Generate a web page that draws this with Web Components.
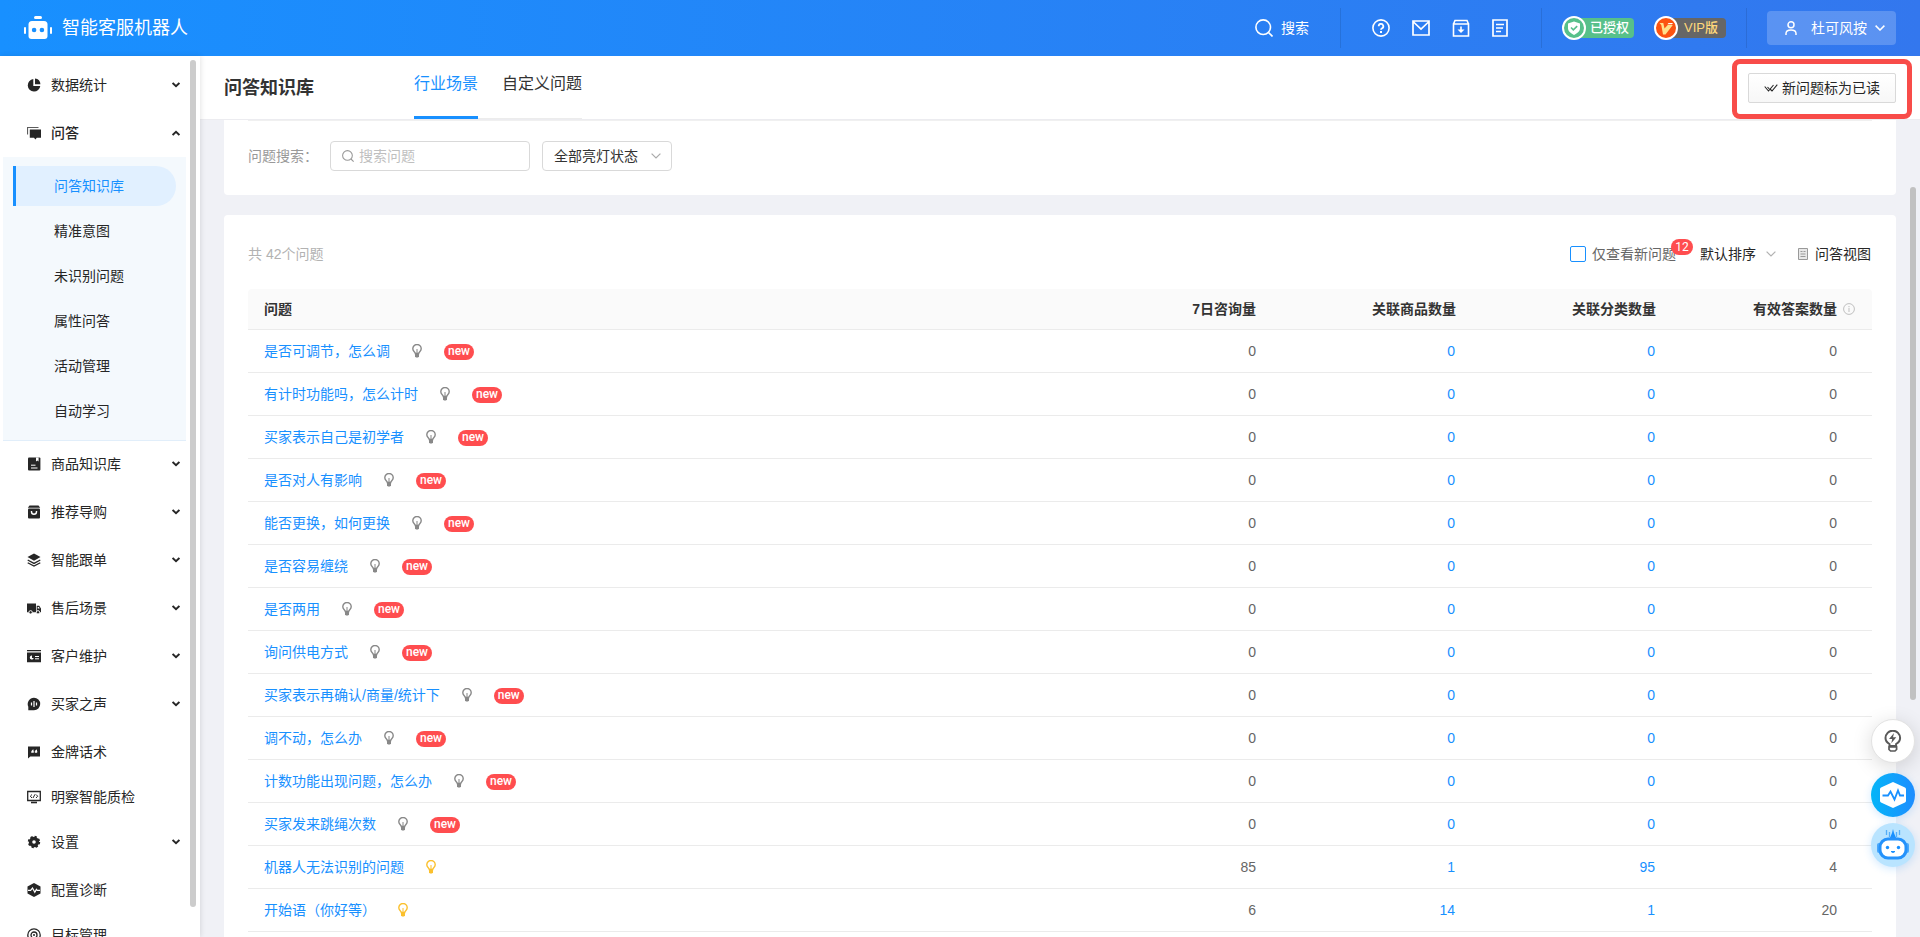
<!DOCTYPE html>
<html lang="zh-CN">
<head>
<meta charset="utf-8">
<title>智能客服机器人 - 问答知识库</title>
<style>
  html, body { height: 100%; margin: 0; }
  body {
    overflow: hidden;
    font: 14px/20px "Liberation Sans", "Noto Sans CJK SC", sans-serif;
    color: #333;
    background: #f0f1f6;
  }
</style>
</head>
<body>
<kb-app></kb-app>
<script>
const ICONS = {
  logo: ['0 0 28 24', '<g fill="#fff"><rect x="10" y="0" width="8" height="3" rx="1.5"/><path d="M8 5h12a3.500 3.500 0 0 1 3.500 3.500V20a3 3 0 0 1-3 3h-13a3 3 0 0 1-3-3V8.500A3.500 3.500 0 0 1 8 5z"/><rect x="0" y="11" width="2" height="7" rx="1"/><rect x="26" y="11" width="2" height="7" rx="1"/></g><circle cx="10.100" cy="14" r="2.300" fill="#1890ff"/><circle cx="17.900" cy="14" r="2.300" fill="#1890ff"/>'],
  search: ['0 0 18 18', '<g fill="none" stroke="currentColor" stroke-width="1.600"><circle cx="8.200" cy="8.200" r="7.300"/><path d="M13.500 13.500l4 4"/></g>'],
  help: ['0 0 18 18', '<g fill="none" stroke="currentColor" stroke-width="1.600"><circle cx="9" cy="9" r="8.100"/><path d="M6.700 7.200a2.300 2.300 0 1 1 3.400 2c-.8.450-1.100.8-1.100 1.600" stroke-width="1.800"/></g><rect x="8" y="12" width="2" height="2" fill="currentColor"/>'],
  mail: ['0 0 18 18', '<path d="M1 2h16v14H1zM1.500 3L9 10l7.500-7" fill="none" stroke="currentColor" stroke-width="1.700"/>'],
  inbox: ['0 0 18 18', '<path d="M1.500 5h15v12h-15zM1.500 5l1.500-3.500h12L16.500 5M9 7.500v5" fill="none" stroke="currentColor" stroke-width="1.600"/><path d="M5.500 10.500h7L9 14z" fill="currentColor"/>'],
  note: ['0 0 16 18', '<path d="M1 1h14v16H1zM4 5.500h8M4 9h7M4 12.500h5" fill="none" stroke="currentColor" stroke-width="1.700"/>'],
  shield: ['0 0 24 24', '<circle cx="12" cy="12" r="11" fill="#57c08a" stroke="#fff" stroke-width="2"/><path d="M12 5.500l6 2v4.500c0 3.200-2.500 5.200-6 7-3.500-1.800-6-3.800-6-7V7.500z" fill="#fff"/><path d="M9 11.500l2.300 2.300 3.900-3.700" fill="none" stroke="#57c08a" stroke-width="1.600"/>'],
  vip: ['0 0 24 24', '<circle cx="12" cy="12" r="11" fill="#fc5310" stroke="#fff" stroke-width="2"/><path d="M5.500 7h3.800l1.200 5.500L13.800 9h5L11.500 18.500H9L7.300 9z" fill="#ffe08a"/><path d="M14.500 7h4.500l-1 1.300h-4.500z" fill="#fff"/>'],
  user: ['0 0 12 14', '<g fill="none" stroke="currentColor" stroke-width="1.500"><circle cx="6" cy="3.800" r="3"/><path d="M1 14v-1.500C1 10.200 3 9 6 9s5 1.200 5 3.500V14"/></g>'],
  down: ['0 0 10 6', '<path d="M.6.600L5 5 9.400.6" fill="none" stroke="currentColor" stroke-width="1.500"/>'],
  thin: ['0 0 10 6', '<path d="M.6.600L5 5 9.400.6" fill="none" stroke="currentColor" stroke-width="1.200"/>'],
  caret: ['0 0 8 6', '<path d="M.6 1L4 4.300 7.400 1" fill="none" stroke="currentColor" stroke-width="1.900"/>'],
  checks: ['0 0 14 10', '<path d="M.7 3.500l3.800 4.500 5-6M6 6l2 2 5.300-6.300M3.500 4l1.800 2" fill="none" stroke="currentColor" stroke-width="1.100"/>'],
  bulb: ['0 0 10 14', '<path d="M3.300 9.500C3.300 7.800.8 7.300.8 4.700a4.200 4.200 0 0 1 8.400 0c0 2.600-2.500 3.100-2.500 4.800z" fill="none" stroke="currentColor" stroke-width="1.400"/><path d="M3 9h4v3.500L6 13.500H4L3 12.500z" fill="currentColor"/><path d="M5 5v4.500" stroke="currentColor"/>'],
  view: ['0 0 10 12', '<path d="M.5.500h9v11h-9z" fill="#e8e8e8" stroke="currentColor"/><path d="M2.500 3.500h2M5.500 3.500h2M2.500 6h5M2.500 8.500h5" stroke="currentColor"/>'],
  info: ['0 0 12 12', '<circle cx="6" cy="6" r="5.400" fill="none" stroke="currentColor"/><path d="M6 5v4M6 3v1.200" stroke="currentColor"/>'],
  pie: ['0 0 14 14', '<path d="M6.300 1v7h7A6.300 6.300 0 1 1 6.300 1z" fill="currentColor"/><path d="M8 .6A6 6 0 0 1 13.400 6.300H8z" fill="currentColor"/>'],
  chat: ['0 0 14 14', '<path d="M.5 8.500V1.500h11" fill="none" stroke="currentColor" stroke-opacity=".75" stroke-width="1.200"/><path d="M2.800 3.500H14v8.200H9.800L8.400 13.500 7 11.700H2.800z" fill="currentColor"/>'],
  book: ['0 0 14 14', '<rect x="1" y=".5" width="12.400" height="13" rx="1" fill="currentColor"/><path d="M9 .5v4l1.300-1 1.300 1v-4z" fill="#fff"/><path d="M4 8.200h4.500M4 11h6.500" stroke="#fff"/>'],
  bag: ['0 0 14 14', '<path d="M2.500.5h9l1.700 2.200H.8z" fill="currentColor"/><rect x="1" y="3.500" width="12" height="10" rx="1" fill="currentColor"/><path d="M4.500 6v.8a2.500 2.500 0 0 0 5 0V6" fill="none" stroke="#fff" stroke-width="1.400"/>'],
  stack: ['0 0 14 14', '<path d="M7 .5l6.500 3.600L7 7.800.5 4.100z" fill="currentColor"/><path d="M.7 7L7 10.400 13.300 7M.7 9.700L7 13.100l6.300-3.400" fill="none" stroke="currentColor" stroke-width="1.300"/>'],
  truck: ['0 0 14 14', '<path d="M0 2.500h9v8.700H0zM9.700 4.800h2.500L14 7.600v3.600H9.700z" fill="currentColor"/><path d="M10.700 6h1.200l.8 1.600h-2z" fill="#fff"/><g fill="currentColor" stroke="#fff" stroke-width=".9"><circle cx="3.600" cy="11.300" r="1.700"/><circle cx="11" cy="11.300" r="1.700"/></g>'],
  crm: ['0 0 14 14', '<path d="M0 1h14v1.300H0zM0 3.500h14v9.700H0z" fill="currentColor"/><path d="M5 6.500a2 2 0 1 0 1.700 2.500H5z" fill="#fff"/><path d="M8 7.500h4M8 9.800h4" stroke="#fff"/>'],
  voice: ['0 0 14 14', '<path d="M7 .8a6.200 6.200 0 1 1 0 12.400H1.300v-3.500A6.200 6.200 0 0 1 7 .8z" fill="currentColor"/><path d="M4.500 5.500v3M7 4v6M9.500 5.500v3" stroke="#fff" stroke-width="1.200"/>'],
  quote: ['0 0 14 14', '<path d="M1 1.500h12v10H3.300L1 13.500z" fill="currentColor"/><path d="M6.500 4.800c-1.300.3-2 1-2 2.700h2V6M10 4.800c-1.300.3-2 1-2 2.700h2V6" fill="#fff" stroke="#fff" stroke-width=".5"/>'],
  monitor: ['0 0 14 14', '<path d="M.7 1.500h12.600v9H.7z" fill="none" stroke="currentColor" stroke-width="1.300"/><path d="M5 4.500L3.300 6.200 5 8M6 8l2-3.700M9 4.500l1.700 1.700L9 8" fill="none" stroke="currentColor"/><path d="M4 12.500h6" stroke="currentColor" stroke-width="1.600"/>'],
  gear: ['0 0 14 14', '<circle cx="7" cy="7" r="5.200" fill="currentColor"/><circle cx="7" cy="7" r="5" fill="none" stroke="currentColor" stroke-width="2.400" stroke-dasharray="2.100 1.820"/><circle cx="7" cy="7" r="1.800" fill="#fff"/>'],
  diag: ['0 0 14 14', '<path d="M7 0l6.500 3.500v7L7 14 .5 10.500v-7z" fill="currentColor"/><path d="M1 7.300h2.600L5.500 5l2.300 4.300 1.600-3 .8 1H13" fill="none" stroke="#fff" stroke-width="1.200"/>'],
  target: ['0 0 14 14', '<g fill="none" stroke="currentColor" stroke-width="1.300"><circle cx="7" cy="7" r="6.200"/><circle cx="7" cy="7" r="3"/></g><circle cx="7" cy="7" r="1" fill="currentColor"/>'],
  spark: ['0 0 20 22', '<path d="M6.500 16v-2C4 12.600 2.500 10.700 2.500 8a7.300 7.300 0 0 1 14.600 0c0 2.700-1.500 4.600-4 6v2z" fill="none" stroke="currentColor" stroke-width="2"/><path d="M6 17h7.600v2.500L12 21H7.600L6 19.500z" fill="none" stroke="currentColor" stroke-width="1.700"/><path d="M11 3L6 9h3.200l-.9 4.300 5-6h-3.300z" fill="currentColor"/>'],
  pulse: ['0 0 28 28', '<path d="M14 1l12 5.500a2 2 0 0 1 1 1.800v11.400a2 2 0 0 1-1 1.800L14 27 2 21.500a2 2 0 0 1-1-1.800V8.300a2 2 0 0 1 1-1.800z" fill="#fff"/><path d="M3.500 14.500H9l2.500-4 4 8 3.500-9 2 5h4" fill="none" stroke="#1890ff" stroke-width="1.800"/>'],
  bot: ['0 0 32 32', '<path d="M12.500 3v5M19.500 3v5M9.500 1v5M22.500 1v5" stroke="#55aef9" stroke-width="1.300"/><path d="M16 0l1 4 2.500 6h-7L15 4z" fill="#1890ff"/><rect x="0" y="14" width="4" height="10" rx="2" fill="#4aa8fb"/><rect x="28" y="14" width="4" height="10" rx="2" fill="#4aa8fb"/><rect x="3" y="10" width="26" height="19" rx="8" fill="#fff" stroke="#2492fb" stroke-width="3"/><circle cx="10.500" cy="18.500" r="1.700" fill="#1890ff"/><circle cx="21.500" cy="18.500" r="1.700" fill="#1890ff"/><path d="M14 22.500q2 2 4 0z" fill="#1890ff" stroke="#1890ff"/>']
};

function define(name, html, setup) {
  const template = document.createElement('template');
  template.innerHTML = html;
  customElements.define(name, class extends HTMLElement {
    connectedCallback() {
      if (this.shadowRoot) return;
      const root = this.attachShadow({ mode: 'open' });
      root.append(template.content.cloneNode(true));
      if (setup) setup(this, root);
    }
  });
}

/* Icon: <ui-icon name size>, where size is the drawn width */
define('ui-icon', `<style>:host{display:inline-flex;flex:none} svg{display:block}</style>`, (host, root) => {
  const [box, shapes] = ICONS[host.getAttribute('name')];
  const [, , w, h] = box.split(' ').map(Number);
  const width = Number(host.getAttribute('size')) || w;
  root.innerHTML += `<svg viewBox="${box}" width="${width}" height="${Math.round(width * h / w)}" aria-hidden="true">${shapes}</svg>`;
});

/* Puts the icon named by the host's "icon" attribute where the <b> stands */
function fillIcon(host, root) {
  const icon = document.createElement('ui-icon');
  icon.setAttribute('name', host.getAttribute('icon'));
  root.querySelector('b').replaceWith(icon);
}

define('header-badge', `
<style>
  :host{display:flex;align-items:center;width:72px}
  ui-icon{position:relative;z-index:1}
  span{flex:1;height:20px;margin-left:-12px;padding-left:var(--badge-indent);border-radius:4px;background:var(--badge-bg);color:var(--badge-fg);font-size:13px;line-height:20px;font-weight:500;white-space:nowrap}
</style>
<b></b><span><slot></slot></span>`, fillIcon);

define('app-header', `
<style>
  :host{display:flex;align-items:center;height:56px;padding:0 24px;color:#fff;background:linear-gradient(90deg,#1890ff,#3377ee);box-sizing:border-box}
  h1{margin:0 auto 0 10px;font-size:18px;line-height:24px;font-weight:400}
  a,button{display:flex;align-items:center;color:inherit;text-decoration:none;font:inherit}
  button{border:0;background:none;padding:0;cursor:pointer}
  i{width:1px;height:40px;background:#0000001a}
  .search{gap:8px;margin-right:31px}
  nav{display:flex;gap:22px;margin:0 33px 0 31px}
  .badges{display:flex;gap:20px;margin:0 20px}
  .user{height:34px;margin-left:20px;padding:0 11px 0 18px;border-radius:4px;background:#ffffff33}
  .user span{margin:0 8px 0 14px}
  .vip{--badge-bg:#666;--badge-fg:#ffd87a;--badge-indent:18px}
  .auth{--badge-bg:#57c08a;--badge-fg:#fff;--badge-indent:16px}
</style>
<ui-icon name="logo"></ui-icon><h1>智能客服机器人</h1>
<button class="search"><ui-icon name="search"></ui-icon>搜索</button><i></i>
<nav>
  <a href="#help" aria-label="帮助"><ui-icon name="help"></ui-icon></a>
  <a href="#mail" aria-label="消息"><ui-icon name="mail"></ui-icon></a>
  <a href="#download" aria-label="下载"><ui-icon name="inbox"></ui-icon></a>
  <a href="#log" aria-label="日志"><ui-icon name="note"></ui-icon></a>
</nav><i></i>
<div class="badges"><header-badge class="auth" icon="shield">已授权</header-badge><header-badge class="vip" icon="vip">VIP版</header-badge></div><i></i>
<button class="user"><ui-icon name="user"></ui-icon><span>杜可风按</span><ui-icon name="down"></ui-icon></button>`);

/* Sidebar entry; a "group" attribute adds the arrow, "open" turns it up */
define('nav-item', `
<style>
  :host{display:block}
  :host([group]:not([open])){margin-bottom:3px}
  :host([open]){margin-bottom:2px;font-weight:500}
  a{display:flex;align-items:center;height:45px;padding:0 20px 0 27px;color:#262626;text-decoration:none}
  span{flex:1;margin-left:10px}
  .arrow{display:none}
  :host([group]) .arrow{display:inline-flex}
  :host([open]) .arrow{transform:rotate(180deg)}
</style>
<a href="#"><b></b><span><slot></slot></span><ui-icon class="arrow" name="caret"></ui-icon></a>`, fillIcon);

define('nav-sub', `
<style>
  :host{display:block}
  a{display:flex;align-items:center;height:40px;margin:0 10px 5px;padding-left:38px;border-left:3px solid transparent;color:#262626;text-decoration:none}
  :host([active]) a{color:#1890ff;background:#e1f0ff;border-left-color:#1890ff;border-radius:0 20px 20px 0}
</style>
<a href="#"><slot></slot></a>`);

define('app-sidebar', `
<style>
  :host{display:block;position:relative;width:200px;flex:none;overflow:hidden;background:#fff;box-shadow:1px 0 5px #0000001a;z-index:1;box-sizing:border-box}
  nav{padding-top:6px}
  .sub{margin:0 14px 0 3px;padding:9px 0 4px;background:#f4f9fd;border-bottom:1px solid #e1eefa}
  .bar{position:absolute;right:4px;top:4px;bottom:30px;width:6px;border-radius:3px;background:#ccc}
</style>
<nav>
  <nav-item icon="pie" group>数据统计</nav-item>
  <nav-item icon="chat" group open>问答</nav-item>
  <div class="sub">
    <nav-sub active>问答知识库</nav-sub><nav-sub>精准意图</nav-sub><nav-sub>未识别问题</nav-sub>
    <nav-sub>属性问答</nav-sub><nav-sub>活动管理</nav-sub><nav-sub>自动学习</nav-sub>
  </div>
  <nav-item icon="book" group>商品知识库</nav-item>
  <nav-item icon="bag" group>推荐导购</nav-item>
  <nav-item icon="stack" group>智能跟单</nav-item>
  <nav-item icon="truck" group>售后场景</nav-item>
  <nav-item icon="crm" group>客户维护</nav-item>
  <nav-item icon="voice" group>买家之声</nav-item>
  <nav-item icon="quote">金牌话术</nav-item>
  <nav-item icon="monitor">明察智能质检</nav-item>
  <nav-item icon="gear" group>设置</nav-item>
  <nav-item icon="diag">配置诊断</nav-item>
  <nav-item icon="target">目标管理</nav-item>
</nav>
<div class="bar"></div>`);

define('page-bar', `
<style>
  :host{display:flex;align-items:center;position:relative;height:64px;padding:0 24px;background:#fff;border-bottom:1px solid #ececf0;box-sizing:border-box}
  h2{width:190px;margin:0;font-size:18px;line-height:24px;font-weight:700}
  nav{display:flex;align-self:stretch;gap:24px;margin-right:auto;border-bottom:1px solid #ececec}
  nav a{height:56px;color:#333;text-decoration:none;font-size:16px;line-height:56px;margin-bottom:-1px}
  nav a.on{height:60px;color:#1890ff;border-bottom:3px solid #1890ff}
  button{display:flex;align-items:center;gap:4px;height:30px;padding:0 15px;border:1px solid #d9d9d9;border-radius:2px;background:linear-gradient(#fff,#f7f7f7);color:#262626;font:inherit}
  .mark{position:absolute;right:8px;top:3px;width:180px;height:60px;border:5px solid #f84c49;border-radius:8px;box-sizing:border-box;pointer-events:none;z-index:2}
</style>
<h2>问答知识库</h2>
<nav><a class="on" href="#industry">行业场景</a><a href="#custom">自定义问题</a></nav>
<button><ui-icon name="checks"></ui-icon>新问题标为已读</button>
<div class="mark"></div>`);

define('filter-card', `
<style>
  :host{display:block;padding:0 24px;background:#fff;border-radius:0 0 4px 4px}
  .row{display:flex;align-items:center;height:74px;padding-bottom:4px;border-top:1px solid #f0f0f0;box-sizing:border-box}
  :host{padding-bottom:1px}
  label{width:82px;color:#999}
  .box{display:flex;align-items:center;height:30px;border:1px solid #d9d9d9;border-radius:4px;box-sizing:border-box;color:#999}
  .find{width:200px;margin-right:12px;padding-left:11px;gap:5px}
  input{flex:1;min-width:0;border:0;padding:0;outline:0;background:none;font:inherit}
  input::placeholder{color:#bfbfbf;opacity:1}
  .state{position:relative;width:130px}
  select{appearance:none;width:100%;height:28px;border:0;background:none;padding:0 0 0 11px;font:inherit;color:#333}
  .state ui-icon{position:absolute;right:10px;color:#aaa;pointer-events:none}
</style>
<div class="row">
<label for="q">问题搜索：</label>
<div class="box find"><ui-icon name="search" size="12"></ui-icon><input id="q" placeholder="搜索问题"></div>
<div class="box state"><select aria-label="亮灯状态"><option>全部亮灯状态</option></select><ui-icon name="thin"></ui-icon></div>
</div>`);

define('list-toolbar', `
<style>
  :host{display:flex;align-items:center;height:78px;padding-right:1px;color:#b2b2b2;margin-bottom:-4px;box-sizing:border-box}
  .count{margin-right:auto}
  label{display:flex;align-items:center;position:relative;gap:6px;color:#666;margin-right:24px}
  input{appearance:none;width:16px;height:16px;margin:0;border:1px solid #1890ff;border-radius:2px;background:#fff}
  label b{position:absolute;right:-17px;top:-5px;height:16px;width:22px;border-radius:8px;background:#ff4d4f;color:#fff;font:400 12px/17px Roboto,sans-serif;text-align:center}
  .sort{position:relative;display:flex;align-items:center;margin-right:22px}
  select{appearance:none;width:76px;border:0;padding:0;background:none;font:inherit;color:#262626}
  .sort ui-icon{position:absolute;right:0;pointer-events:none}
  a{display:flex;align-items:center;gap:7px;color:#262626;text-decoration:none}
  a ui-icon{color:#999}
</style>
<span class="count">共 42个问题</span>
<label><input type="checkbox">仅查看新问题<b>12</b></label>
<div class="sort"><select aria-label="排序"><option>默认排序</option></select><ui-icon name="thin"></ui-icon></div>
<a href="#view"><ui-icon name="view"></ui-icon>问答视图</a>`);

const QUESTIONS = [
  ['是否可调节，怎么调'], ['有计时功能吗，怎么计时'], ['买家表示自己是初学者'], ['是否对人有影响'],
  ['能否更换，如何更换'], ['是否容易缠绕'], ['是否两用'], ['询问供电方式'], ['买家表示再确认/商量/统计下'],
  ['调不动，怎么办'], ['计数功能出现问题，怎么办'], ['买家发来跳绳次数'],
  ['机器人无法识别的问题', 85, 1, 95, 4], ['开始语（你好等）', 6, 14, 1, 20]
];

define('question-table', `
<style>
  :host{display:block}
  table{width:100%;border-collapse:separate;border-spacing:0;table-layout:fixed}
  th,td{height:42px;padding:0 16px;border-bottom:1px solid #ebebeb;text-align:right;color:#666}
  th{height:40px;background:#fafafa;color:#333;font-weight:700;white-space:nowrap}
  th:first-child{text-align:left;border-radius:4px 0 0 0}
  th:last-child{padding-right:17px;border-radius:0 4px 0 0}
  td:last-child{padding-right:35px}
  .num{padding-right:17px}
  th div{display:flex;align-items:center;justify-content:flex-end;gap:6px}
  th ui-icon{color:#bfbfbf}
  a{color:#1890ff;text-decoration:none}
  .q{display:flex;align-items:center;gap:22px;color:#888}
  .lit{color:#fbc02d}
  .q b{width:30px;height:16px;margin-top:2px;border-radius:8px;background:#ff4d4f;color:#fff;font:500 12px/15px Roboto,sans-serif;text-align:center}
</style>
<table>
  <colgroup><col><col style="width:200px"><col style="width:200px"><col style="width:200px"><col style="width:200px"></colgroup>
  <thead><tr><th>问题</th><th>7日咨询量</th><th>关联商品数量</th><th>关联分类数量</th><th><div>有效答案数量<ui-icon name="info"></ui-icon></div></th></tr></thead>
  <tbody></tbody>
</table>`, (host, root) => {
  root.querySelector('tbody').innerHTML = QUESTIONS.map(([text, asked = 0, goods = 0, kinds = 0, answers = 0]) => `
    <tr><td><div class="q"><a href="#q">${text}</a><ui-icon name="bulb" ${asked ? 'class="lit"' : ''}></ui-icon>${asked ? '' : '<b>new</b>'}</div></td>
    <td>${asked}</td><td class="num"><a href="#g">${goods}</a></td><td class="num"><a href="#c">${kinds}</a></td><td>${answers}</td></tr>`).join('');
});

define('float-tools', `
<style>
  :host{position:absolute;right:5px;bottom:70px;display:flex;flex-direction:column;align-items:center;z-index:3}
  button{display:flex;align-items:center;justify-content:center;width:44px;height:44px;padding:0;border:0;border-radius:50%}
  .tip{margin-bottom:10px;background:#fff;border:1px solid #e3e3e3;color:#595959;box-shadow:0 4px 20px #00000026}
  .diag{margin-bottom:6px;background:linear-gradient(90deg,#04b5f8,#1e8dff);box-shadow:0 2px 8px #1890ff33}
  .bot{background:#b9e4ff;box-shadow:0 2px 8px #1890ff33}
</style>
<button class="tip" aria-label="提示"><ui-icon name="spark"></ui-icon></button>
<button class="diag" aria-label="诊断"><ui-icon name="pulse"></ui-icon></button>
<button class="bot" aria-label="机器人"><ui-icon name="bot"></ui-icon></button>`);

define('kb-app', `
<style>
  :host{display:flex;flex-direction:column;height:100vh;position:relative;overflow:hidden}
  app-header{flex:none}
  .body{display:flex;flex:1;min-height:0}
  main{flex:1;min-width:0;display:flex;flex-direction:column;overflow:hidden}
  page-bar,filter-card{flex:none}
  .content{flex:1;min-height:0;display:flex;flex-direction:column;gap:20px;padding:0 24px}
  section{flex:1;min-height:0;padding:0 24px;background:#fff;border-radius:4px 4px 0 0}
  .scroll{position:absolute;right:4px;top:187px;width:6px;height:513px;border-radius:3px;background:#c1c1c1}
</style>
<app-header></app-header>
<div class="body">
  <app-sidebar></app-sidebar>
  <main>
    <page-bar></page-bar>
    <div class="content">
      <filter-card></filter-card>
      <section><list-toolbar></list-toolbar><question-table></question-table></section>
    </div>
  </main>
</div>
<div class="scroll"></div>
<float-tools></float-tools>`);
</script>
</body>
</html>
